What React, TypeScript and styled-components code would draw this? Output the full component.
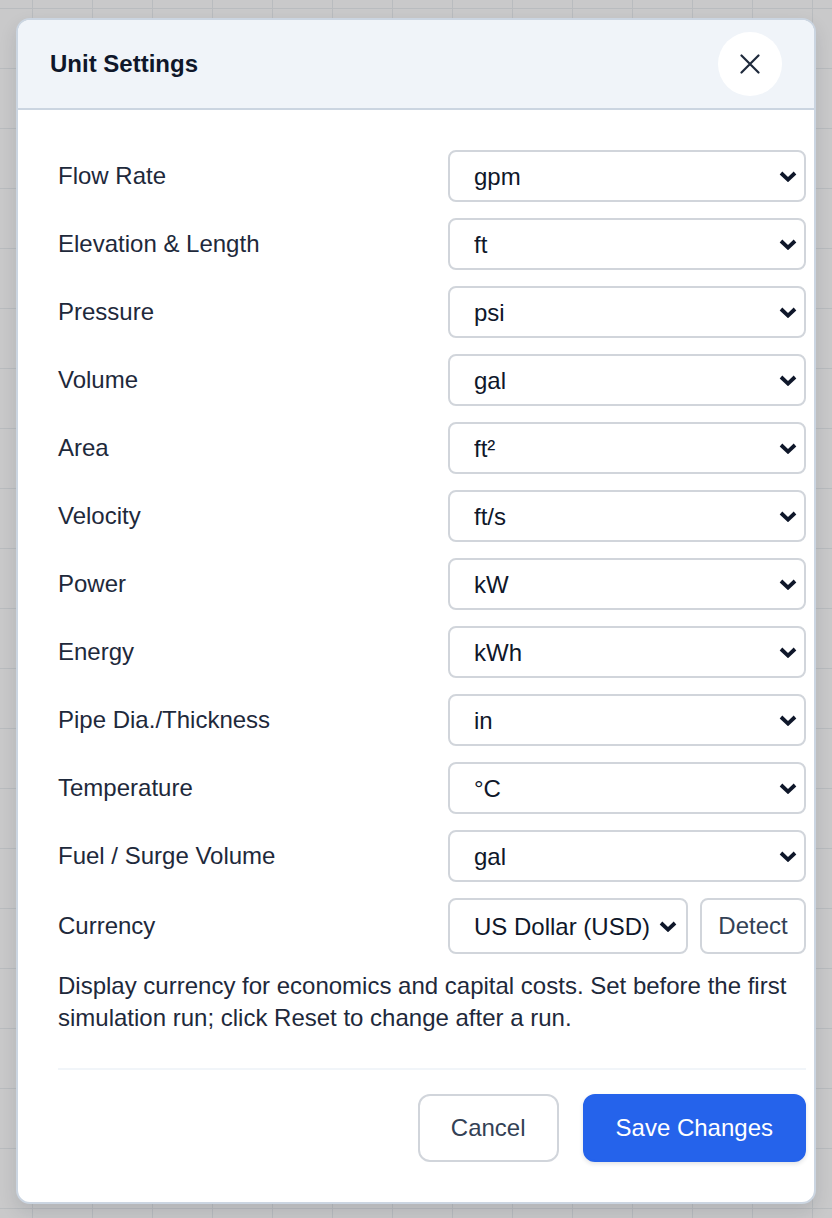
import * as React from "react";
import styled, { createGlobalStyle } from "styled-components";

const GlobalStyle = createGlobalStyle`
  html, body {
    margin: 0;
    padding: 0;
  }
  body {
    background-color: #c9c9ca;
    background-image:
      linear-gradient(to right, #b9bcbf 1px, transparent 1px),
      linear-gradient(to bottom, #b9bcbf 1px, transparent 1px);
    background-size: 60px 60px;
    background-position: 32px 8px;
    font-family: "Liberation Sans", Arial, sans-serif;
    min-height: 1218px;
  }
`;

const Page = styled.div`
  padding: 18px 0 0 16px;
`;

const Modal = styled.div`
  width: 800px;
  box-sizing: border-box;
  background: #ffffff;
  border: 2px solid #cbd5e1;
  border-radius: 14px;
  overflow: hidden;
  box-shadow: 0 8px 18px rgba(15, 23, 42, 0.12);
`;

const Header = styled.div`
  height: 88px;
  display: flex;
  align-items: center;
  justify-content: space-between;
  padding: 0 32px;
  background: #f0f4f9;
  border-bottom: 2px solid #cbd5e1;
`;

const Title = styled.h2`
  margin: 0;
  font-size: 24px;
  font-weight: 700;
  color: #0f172a;
`;

const CloseButton = styled.button`
  width: 64px;
  height: 64px;
  border: none;
  border-radius: 50%;
  background: #ffffff;
  display: flex;
  align-items: center;
  justify-content: center;
  padding: 0;
  cursor: pointer;
`;

const Body = styled.div`
  padding: 40px 8px 40px 40px;
`;

const Fields = styled.div`
  display: flex;
  flex-direction: column;
  gap: 16px;
`;

const Row = styled.div`
  display: grid;
  grid-template-columns: 390px 358px;
  align-items: center;
`;

const Label = styled.label`
  font-size: 24px;
  color: #1e293b;
`;

const SelectWrap = styled.div<{ $width?: number }>`
  position: relative;
  width: ${({ $width }) => ($width ? `${$width}px` : "100%")};
  flex: none;
`;

const Select = styled.select<{ $tall?: boolean }>`
  appearance: none;
  display: block;
  width: 100%;
  height: ${({ $tall }) => ($tall ? 56 : 52)}px;
  box-sizing: border-box;
  border: 2px solid #d1d5db;
  border-radius: 8px;
  background: #ffffff;
  padding: 0 36px 0 24px;
  font-family: "Liberation Sans", Arial, sans-serif;
  font-size: 24px;
  color: #0f172a;
`;

// chevron drawn over the right end of the select box
const Chevron = styled.svg<{ $right: number }>`
  position: absolute;
  top: 50%;
  right: ${({ $right }) => $right}px;
  margin-top: -5px;
  pointer-events: none;
`;

const CurrencyControls = styled.div`
  display: flex;
  gap: 12px;
`;

const DetectButton = styled.button`
  height: 56px;
  box-sizing: border-box;
  padding: 0 16px;
  border: 2px solid #d1d5db;
  border-radius: 8px;
  background: #ffffff;
  font-family: "Liberation Sans", Arial, sans-serif;
  font-size: 24px;
  color: #334155;
  flex: 1;
`;

const Help = styled.p`
  margin: 16px 0 0;
  font-size: 24px;
  line-height: 32px;
  color: #1e293b;
`;

const Footer = styled.div`
  margin-top: 34px;
  padding-top: 24px;
  border-top: 2px solid #f1f5f9;
  display: flex;
  justify-content: flex-end;
  gap: 24px;
`;

const Button = styled.button<{ $primary?: boolean }>`
  height: 68px;
  box-sizing: border-box;
  padding: 0 31px;
  border-radius: 12px;
  font-family: "Liberation Sans", Arial, sans-serif;
  font-size: 24px;
  border: 2px solid ${({ $primary }) => ($primary ? "#2563eb" : "#d1d5db")};
  background: ${({ $primary }) => ($primary ? "#2563eb" : "#ffffff")};
  color: ${({ $primary }) => ($primary ? "#ffffff" : "#334155")};
  box-shadow: ${({ $primary }) =>
    $primary ? "0 2px 4px rgba(15, 23, 42, 0.12)" : "none"};
`;

const units: [string, string][] = [
  ["Flow Rate", "gpm"],
  ["Elevation & Length", "ft"],
  ["Pressure", "psi"],
  ["Volume", "gal"],
  ["Area", "ft²"],
  ["Velocity", "ft/s"],
  ["Power", "kW"],
  ["Energy", "kWh"],
  ["Pipe Dia./Thickness", "in"],
  ["Temperature", "°C"],
  ["Fuel / Surge Volume", "gal"],
];

const CloseIcon = () => (
  <svg width="20" height="20" viewBox="0 0 20 20">
    <path
      d="M1.5 1.5 18.5 18.5M18.5 1.5 1.5 18.5"
      stroke="#1e293b"
      strokeWidth="2.2"
      strokeLinecap="round"
      fill="none"
    />
  </svg>
);

const DropDown = (props: {
  value: string;
  label: string;
  width?: number;
  tall?: boolean;
  arrowRight?: number;
}) => (
  <SelectWrap $width={props.width}>
    <Select $tall={props.tall} defaultValue={props.value}>
      <option value={props.value}>{props.label}</option>
    </Select>
    <Chevron
      $right={props.arrowRight ?? 9}
      width="18"
      height="11"
      viewBox="0 0 18 11"
    >
      <path
        d="M2 2 9 8.6 16 2"
        stroke="#0f172a"
        strokeWidth="3.8"
        strokeLinejoin="miter"
        fill="none"
      />
    </Chevron>
  </SelectWrap>
);

export default function App() {
  return (
    <Page>
      <GlobalStyle />
      <Modal>
        <Header>
          <Title>Unit Settings</Title>
          <CloseButton aria-label="Close">
            <CloseIcon />
          </CloseButton>
        </Header>
        <Body>
          <Fields>
            {units.map(([name, unit]) => (
              <Row key={name}>
                <Label>{name}</Label>
                <DropDown value={unit} label={unit} />
              </Row>
            ))}
            <Row>
              <Label>Currency</Label>
              <CurrencyControls>
                <DropDown
                  value="USD"
                  label="US Dollar (USD)"
                  width={240}
                  tall
                  arrowRight={11}
                />
                <DetectButton>Detect</DetectButton>
              </CurrencyControls>
            </Row>
          </Fields>
          <Help>
            Display currency for economics and capital costs. Set before the
            first simulation run; click Reset to change after a run.
          </Help>
          <Footer>
            <Button>Cancel</Button>
            <Button $primary>Save Changes</Button>
          </Footer>
        </Body>
      </Modal>
    </Page>
  );
}
